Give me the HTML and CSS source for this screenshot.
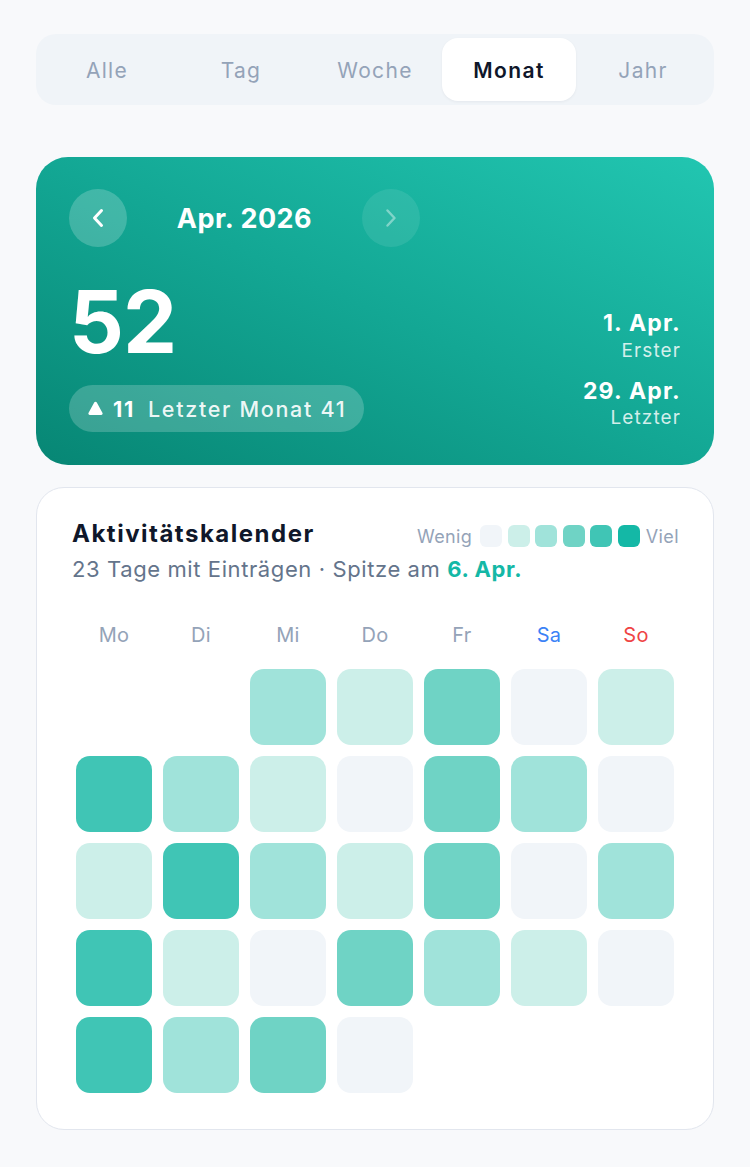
FILE: index.html
```html
<!DOCTYPE html>
<html lang="de">
<head>
<meta charset="utf-8">
<title>Monat</title>
<link rel="stylesheet" href="styles.css">
</head>
<body>
<main class="page">
  <nav class="seg">
    <div class="seg-item">Alle</div>
    <div class="seg-item">Tag</div>
    <div class="seg-item">Woche</div>
    <div class="seg-item active">Monat</div>
    <div class="seg-item">Jahr</div>
  </nav>

  <section class="hero">
    <div class="hero-nav">
      <button class="circ">
        <svg width="24" height="24" viewBox="0 0 24 24" fill="none" stroke="#fff" stroke-width="3" stroke-linecap="round" stroke-linejoin="round"><path d="M15.5 4.5L8.5 12l7 7.5"/></svg>
      </button>
      <div class="hero-title">Apr. 2026</div>
      <button class="circ dim">
        <svg width="24" height="24" viewBox="0 0 24 24" fill="none" stroke="#fff" stroke-width="2.4" stroke-linecap="round" stroke-linejoin="round"><path d="M8.5 4.5l7 7.5-7 7.5"/></svg>
      </button>
    </div>
    <div class="hero-body">
      <div class="hero-left">
        <div class="big">52</div>
        <div class="badge">
          <svg class="tri" width="15" height="14" viewBox="0 0 15 14"><path d="M6.2 1.4a1.5 1.5 0 0 1 2.6 0l5.6 10.3A1.5 1.5 0 0 1 13.1 14H1.9A1.5 1.5 0 0 1 .6 11.7z" fill="#fff"/></svg>
          <span class="bnum">11</span><span class="btext">Letzter Monat 41</span>
        </div>
      </div>
      <div class="hero-right">
        <div class="rd">1. Apr.</div>
        <div class="rl">Erster</div>
        <div class="rd rd2">29. Apr.</div>
        <div class="rl">Letzter</div>
      </div>
    </div>
  </section>

  <section class="card">
    <div class="card-head">
      <h2 class="card-title">Aktivitätskalender</h2>
      <div class="legend">
        <span class="lg-text">Wenig</span>
        <span class="lg-sq">
          <span class="lg l0"></span><span class="lg l1"></span><span class="lg l2"></span><span class="lg l3"></span><span class="lg l4"></span><span class="lg l5"></span>
        </span>
        <span class="lg-text">Viel</span>
      </div>
    </div>
    <p class="sub">23 Tage mit Einträgen · Spitze am <b>6. Apr.</b></p>

    <div class="grid">
      <div class="wd">Mo</div><div class="wd">Di</div><div class="wd">Mi</div><div class="wd">Do</div><div class="wd">Fr</div><div class="wd sa">Sa</div><div class="wd so">So</div>

      <div class="cell none"></div><div class="cell none"></div><div class="cell l2"></div><div class="cell l1"></div><div class="cell l3"></div><div class="cell l0"></div><div class="cell l1"></div>
      <div class="cell l4"></div><div class="cell l2"></div><div class="cell l1"></div><div class="cell l0"></div><div class="cell l3"></div><div class="cell l2"></div><div class="cell l0"></div>
      <div class="cell l1"></div><div class="cell l4"></div><div class="cell l2"></div><div class="cell l1"></div><div class="cell l3"></div><div class="cell l0"></div><div class="cell l2"></div>
      <div class="cell l4"></div><div class="cell l1"></div><div class="cell l0"></div><div class="cell l3"></div><div class="cell l2"></div><div class="cell l1"></div><div class="cell l0"></div>
      <div class="cell l4"></div><div class="cell l2"></div><div class="cell l3"></div><div class="cell l0"></div>
    </div>
  </section>
</main>
</body>
</html>
```

FILE: styles.css
```css
* { box-sizing: border-box; }
html, body { margin: 0; padding: 0; }
body {
  background: #f8f9fb;
  font-family: Inter, "Noto Sans", "Liberation Sans", sans-serif;
  color: #0f172a;
}
.page {
  padding: 34px 36px 30px;
  display: flex;
  flex-direction: column;
}

/* segmented */
.seg {
  display: grid;
  grid-template-columns: repeat(5, 1fr);
  background: #f0f4f8;
  border-radius: 20px;
  padding: 4px;
  height: 71px;
}
.seg-item {
  display: flex;
  align-items: center;
  justify-content: center;
  font-size: 21px;
  font-weight: 400;
  letter-spacing: 1.3px;
  color: #94a3b8;
  border-radius: 16px;
  padding-top: 1px;
}
.seg-item.active {
  background: #fff;
  color: #0f172a;
  font-weight: 600;
  letter-spacing: 1.4px;
  box-shadow: 0 1px 3px rgba(15, 23, 42, 0.05);
}

/* hero */
.hero {
  margin-top: 52px;
  height: 308px;
  border-radius: 32px;
  background: linear-gradient(to top right, #078674 0%, #13a794 50%, #22c6b1 100%);
  color: #fff;
  padding: 32px 34px 33px 33px;
  display: flex;
  flex-direction: column;
}
.hero-nav {
  display: flex;
  align-items: center;
}
.circ {
  width: 58px;
  height: 58px;
  border-radius: 50%;
  border: 0;
  padding: 0;
  background: rgba(255, 255, 255, 0.2);
  display: flex;
  align-items: center;
  justify-content: center;
}
.circ.dim { background: rgba(255, 255, 255, 0.09); }
.circ.dim svg { opacity: 0.4; }
.hero-title {
  width: 235px;
  text-align: center;
  font-size: 27px;
  font-weight: 700;
  letter-spacing: 0.5px;
  line-height: 34px;
  padding-top: 2px;
}
.hero-body {
  flex: 1;
  display: flex;
  justify-content: space-between;
  align-items: flex-end;
}
.hero-left {
  display: flex;
  flex-direction: column;
  align-items: flex-start;
}
.big {
  font-size: 86px;
  font-weight: 700;
  line-height: 1;
  letter-spacing: -1px;
}
.badge {
  margin-top: 20px;
  height: 47px;
  border-radius: 24px;
  background: rgba(255, 255, 255, 0.2);
  display: flex;
  align-items: center;
  padding: 0 18px 0 19px;
  font-size: 21.5px;
  font-weight: 500;
  letter-spacing: 1.7px;
}
.tri { margin-right: 10px; margin-top: -1px; }
.bnum { font-weight: 700; margin-right: 13px; }
.btext { color: rgba(255, 255, 255, 0.92); }
.hero-right {
  display: flex;
  flex-direction: column;
  align-items: flex-end;
  padding-bottom: 2px;
}
.rd { font-size: 23px; font-weight: 700; line-height: 28px; letter-spacing: 1.2px; margin-right: -1px; }
.rd2 { margin-top: 14px; }
.rl { font-size: 19px; color: rgba(255, 255, 255, 0.82); line-height: 24px; letter-spacing: 1.1px; margin-top: 1.5px; margin-right: -1px; }

/* card */
.card {
  margin-top: 22px;
  background: #fff;
  border: 1.5px solid #e2e6ee;
  border-radius: 28px;
  padding: 31px 35px 36px;
}
.card-head {
  display: flex;
  justify-content: space-between;
  align-items: center;
}
.card-title {
  margin: 0;
  font-size: 24px;
  line-height: 30px;
  font-weight: 700;
  letter-spacing: 1.5px;
  color: #0f172a;
}
.legend {
  display: flex;
  align-items: center;
  margin-right: -1px;
  margin-top: 4px;
}
.lg-text { font-size: 18px; color: #94a3b8; letter-spacing: 0.4px; }
.lg-sq { display: flex; gap: 5.5px; margin: 0 6px 0 8px; }
.lg { width: 22px; height: 22px; border-radius: 6px; }
.sub {
  margin: 6px 0 0;
  font-size: 22px;
  line-height: 28px;
  letter-spacing: 0.6px;
  color: #64748b;
}
.sub b { color: #14b8a6; font-weight: 700; }

.l0 { background: #f1f5f9; }
.l1 { background: #ccefe9; }
.l2 { background: #a0e3da; }
.l3 { background: #6fd3c5; }
.l4 { background: #40c5b5; }
.l5 { background: #14b8a6; }

.grid {
  margin: 39px 4px 0;
  display: grid;
  grid-template-columns: repeat(7, 76px);
  grid-template-rows: 36px;
  grid-auto-rows: 76px;
  gap: 11px;
}
.wd {
  line-height: 24px;
  text-align: center;
  font-size: 20px;
  letter-spacing: 0.3px;
  color: #94a3b8;
  align-self: start;
  padding-top: 1px;
}
.wd.sa { color: #3b82f6; }
.wd.so { color: #ef4444; }
.cell { border-radius: 14px; }
.cell.none { background: transparent; }
```
